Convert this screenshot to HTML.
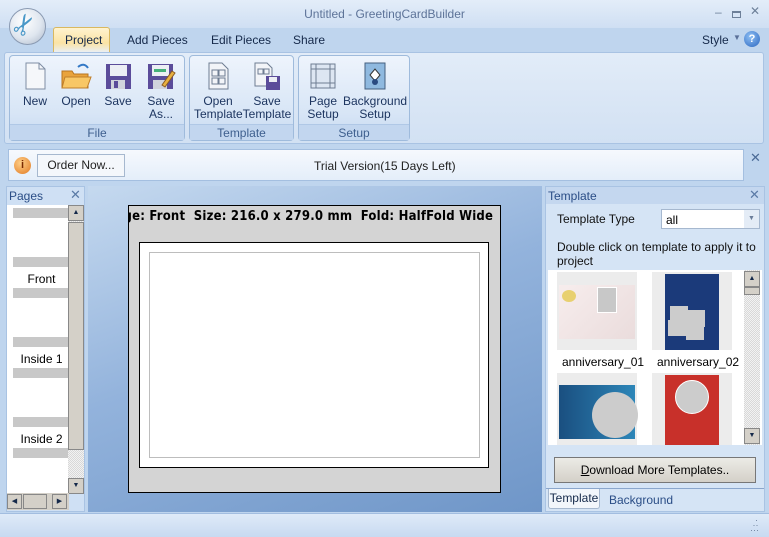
<!DOCTYPE html>
<html><head><style>
*{margin:0;padding:0;box-sizing:border-box}
body{width:769px;height:537px;overflow:hidden;font-family:"Liberation Sans",sans-serif;font-size:12px;color:#15294a;background:#bfd5ee;position:relative}
.a{position:absolute;white-space:nowrap}
.grp{position:absolute;top:55px;height:86px;border:1px solid #9fbbdc;border-radius:4px;background:linear-gradient(#eef4fc,#d7e5f6 70%,#c6d9f0)}
.glab{position:absolute;bottom:0;left:0;right:0;height:16px;background:#c2d6ef;text-align:center;color:#3e5f8e;font-size:12px;line-height:16px;border-top:1px solid #b0c8e6}
.btn{position:absolute;top:5px;text-align:center;font-size:12px;line-height:13px;color:#1d3560;white-space:nowrap}
.btn svg{display:block;margin:0 auto 4px}
.gbar{position:absolute;height:10px;background:#c8c8c8}
.pl{position:absolute;left:5px;width:63px;text-align:center;font-size:12px;color:#000}
</style></head><body>
<div class="a" style="left:0;top:0;width:769px;height:28px;background:linear-gradient(#e3edf9,#cfdff3)"></div>
<div class="a" style="left:0;top:7px;width:769px;text-align:center;color:#5d7398;font-size:12px;">Untitled - GreetingCardBuilder</div>
<div class="a" style="left:715px;top:5px;color:#6d8099;font-size:12px">–</div>
<div class="a" style="left:732px;top:11px;width:9px;height:7px;border:1px solid #6d8099;border-top-width:2px"></div>
<div class="a" style="left:750px;top:4px;color:#6d8099;font-size:12px">✕</div>
<div class="a" style="left:0;top:28px;width:769px;height:24px;background:#bfd5ee"></div>
<div class="a" style="left:9px;top:8px;width:37px;height:37px;border-radius:50%;background:radial-gradient(circle at 40% 35%,#fff,#dfe6ef 55%,#a9b6c8);border:1px solid #8a9ab2"></div>
<div class="a" style="left:13px;top:9px;font-size:28px;line-height:32px;color:#4a98c8;transform:rotate(-60deg)">✂</div>
<div class="a" style="left:53px;top:27px;width:57px;height:26px;background:linear-gradient(#fff3cf,#fbe3a4 60%,#e8f0fb);border:1px solid #d9b860;border-bottom:none;border-radius:3px 3px 0 0"></div>
<div class="a" style="left:65px;top:33px">Project</div>
<div class="a" style="left:127px;top:33px">Add Pieces</div>
<div class="a" style="left:211px;top:33px">Edit Pieces</div>
<div class="a" style="left:293px;top:33px">Share</div>
<div class="a" style="left:702px;top:33px">Style</div>
<div class="a" style="left:733px;top:33px;font-size:8px;color:#5a7099">▼</div>
<div class="a" style="left:744px;top:31px;width:16px;height:16px;border-radius:50%;background:radial-gradient(circle at 40% 35%,#8fc0f4,#2a66c0);color:#fff;font-size:11px;font-weight:bold;text-align:center;line-height:16px">?</div>
<div class="a" style="left:4px;top:52px;width:760px;height:92px;background:linear-gradient(#e2ecf8,#d2e1f3);border:1px solid #a9c3e3;border-radius:3px"></div>
<div class="grp" style="left:9px;width:176px">
 <div class="btn" style="left:5px;width:40px"><svg width="26" height="30"><path d="M4 2h13l6 6v20H4z" fill="#f5f7fa" stroke="#7f8ea4"/><path d="M17 2v6h6" fill="none" stroke="#7f8ea4"/></svg>New</div>
 <div class="btn" style="left:46px;width:40px"><svg width="32" height="30"><path d="M2 10h10l2 3h14v14H2z" fill="#e9a33c" stroke="#b77420"/><path d="M5 16h26l-4 11H2z" fill="#f8c766" stroke="#c07f2a"/><path d="M18 6q6-5 10 1" fill="none" stroke="#3479c6" stroke-width="2"/></svg>Open</div>
 <div class="btn" style="left:88px;width:40px"><svg width="28" height="30"><rect x="2" y="3" width="25" height="25" fill="#5b4c9a"/><rect x="6" y="4" width="17" height="11" fill="#eceef4"/><rect x="7" y="19" width="14" height="9" fill="#d0d3dc"/><rect x="10" y="20" width="4" height="7" fill="#5b4c9a"/></svg>Save</div>
 <div class="btn" style="left:130px;width:42px"><svg width="30" height="30"><rect x="2" y="3" width="25" height="25" fill="#5b4c9a"/><rect x="6" y="4" width="17" height="11" fill="#eceef4"/><rect x="8" y="8" width="12" height="3" fill="#46b07a"/><rect x="7" y="19" width="14" height="9" fill="#d0d3dc"/><path d="M16 24l10-14 3 2-10 14z" fill="#e8b040" stroke="#8a5a20"/></svg>Save<br>As...</div>
 <div class="glab">File</div>
</div>
<div class="grp" style="left:189px;width:105px">
 <div class="btn" style="left:4px;width:48px"><svg width="26" height="30"><path d="M4 2h13l6 6v20H4z" fill="#f2f4f8" stroke="#6e7d92"/><rect x="7" y="9" width="6" height="6" fill="none" stroke="#6e7d92"/><rect x="14" y="9" width="6" height="6" fill="none" stroke="#6e7d92"/><rect x="7" y="17" width="6" height="6" fill="none" stroke="#6e7d92"/><rect x="14" y="17" width="6" height="6" fill="none" stroke="#6e7d92"/></svg>Open<br>Template</div>
 <div class="btn" style="left:52px;width:50px"><svg width="30" height="30"><path d="M3 2h12l5 5v18H3z" fill="#f2f4f8" stroke="#6e7d92"/><rect x="6" y="8" width="5" height="5" fill="none" stroke="#6e7d92"/><rect x="12" y="8" width="5" height="5" fill="none" stroke="#6e7d92"/><rect x="14" y="15" width="14" height="14" fill="#5b4c9a"/><rect x="17" y="16" width="8" height="5" fill="#eceef4"/></svg>Save<br>Template</div>
 <div class="glab">Template</div>
</div>
<div class="grp" style="left:298px;width:112px">
 <div class="btn" style="left:4px;width:40px"><svg width="28" height="30"><rect x="2" y="3" width="24" height="24" fill="#dde6f2" stroke="#6e7d92"/><path d="M2 8h24M2 22h24M7 3v24M21 3v24" stroke="#6e7d92"/></svg>Page<br>Setup</div>
 <div class="btn" style="left:44px;width:64px"><svg width="26" height="30"><rect x="3" y="2" width="20" height="26" fill="#8fb9df" stroke="#44607f"/><path d="M8 14l5-6 5 6-5 6z" fill="#fff" stroke="#333"/><circle cx="13" cy="21" r="3" fill="#2a4a80"/></svg>Background<br>Setup</div>
 <div class="glab">Setup</div>
</div>
<div class="a" style="left:8px;top:149px;width:736px;height:32px;background:linear-gradient(#f6f9fd,#e4eefa);border:1px solid #a4bfe0"></div>
<div class="a" style="left:14px;top:157px;width:17px;height:17px;border-radius:50%;background:radial-gradient(circle at 40% 35%,#ffd08a,#e07820);color:#7a2a00;font-size:11px;font-weight:bold;text-align:center;line-height:17px">i</div>
<div class="a" style="left:37px;top:154px;width:88px;height:23px;background:#f4f7fb;border:1px solid #a6b8cf;text-align:center;line-height:21px;color:#222">Order Now...</div>
<div class="a" style="left:314px;top:159px;color:#222">Trial Version(15 Days Left)</div>
<div class="a" style="left:750px;top:150px;color:#4a6a96;font-size:13px">✕</div>
<div class="a" style="left:6px;top:186px;width:79px;height:326px;background:#cfe0f4;border:1px solid #a9c3e3"></div>
<div class="a" style="left:9px;top:189px;color:#2a4d86">Pages</div>
<div class="a" style="left:70px;top:187px;color:#5a7aa6;font-size:13px">✕</div>
<div class="a" style="left:7px;top:205px;width:62px;height:288px;background:#fff"></div>
<div class="gbar" style="left:13px;top:208px;width:55px"></div>
<div class="gbar" style="left:13px;top:257px;width:55px"></div>
<div class="pl" style="left:10px;top:272px">Front</div>
<div class="gbar" style="left:13px;top:288px;width:55px"></div>
<div class="gbar" style="left:13px;top:337px;width:55px"></div>
<div class="pl" style="left:10px;top:352px">Inside 1</div>
<div class="gbar" style="left:13px;top:368px;width:55px"></div>
<div class="gbar" style="left:13px;top:417px;width:55px"></div>
<div class="pl" style="left:10px;top:432px">Inside 2</div>
<div class="gbar" style="left:13px;top:448px;width:55px"></div>
<div class="a" style="left:68px;top:205px;width:16px;height:288px;background:repeating-conic-gradient(#d8d8d8 0 25%,#f2f2f2 0 50%) 0 0/2px 2px"></div>
<div class="a" style="left:68px;top:205px;width:16px;height:16px;background:#d4d0c8;border:1px solid #888;font-size:7px;text-align:center;line-height:14px">▲</div>
<div class="a" style="left:68px;top:222px;width:16px;height:228px;background:#d4d0c8;border:1px solid #888"></div>
<div class="a" style="left:68px;top:478px;width:16px;height:16px;background:#d4d0c8;border:1px solid #888;font-size:7px;text-align:center;line-height:14px">▼</div>
<div class="a" style="left:7px;top:493px;width:62px;height:17px;background:#d4d0c8"></div>
<div class="a" style="left:7px;top:494px;width:15px;height:15px;background:#d4d0c8;border:1px solid #888;font-size:7px;text-align:center;line-height:13px">◀</div>
<div class="a" style="left:23px;top:494px;width:24px;height:15px;background:#d4d0c8;border:1px solid #888"></div>
<div class="a" style="left:52px;top:494px;width:15px;height:15px;background:#d4d0c8;border:1px solid #888;font-size:7px;text-align:center;line-height:13px">▶</div>
<div class="a" style="left:88px;top:186px;width:454px;height:326px;background:linear-gradient(160deg,#c5d9ef,#93b3dc 45%,#6f96c8)"></div>
<div class="a" style="left:128px;top:205px;width:373px;height:288px;background:#d4d4d4;border:1px solid #000;overflow:hidden">
 <div style="position:absolute;left:-22px;top:3px;white-space:nowrap;font-weight:bold;font-size:13px;color:#000;font-family:'DejaVu Sans Condensed','Liberation Sans Narrow',sans-serif;letter-spacing:0.2px">Page: Front &nbsp;Size: 216.0 x 279.0 mm &nbsp;Fold: HalfFold Wide</div>
 <div style="position:absolute;left:10px;top:36px;width:350px;height:226px;background:#fff;border:1px solid #000"></div>
 <div style="position:absolute;left:20px;top:46px;width:331px;height:206px;border:1px solid #bdbdbd"></div>
</div>
<div class="a" style="left:545px;top:186px;width:220px;height:326px;background:#d5e4f5;border:1px solid #a9c3e3"></div>
<div class="a" style="left:546px;top:187px;width:218px;height:17px;background:#c4d7ef"></div>
<div class="a" style="left:548px;top:189px;color:#2a4d86">Template</div>
<div class="a" style="left:749px;top:187px;color:#5a7aa6;font-size:13px">✕</div>
<div class="a" style="left:557px;top:212px;color:#111">Template Type</div>
<div class="a" style="left:661px;top:209px;width:99px;height:20px;background:#fff;border:1px solid #a6b8cf"></div>
<div class="a" style="left:666px;top:213px;color:#000">all</div>
<div class="a" style="left:744px;top:210px;width:15px;height:18px;background:#e4ecf6;font-size:7px;color:#6a7d99;text-align:center;line-height:18px">▼</div>
<div class="a" style="left:557px;top:240px;color:#111;line-height:14px;width:200px;white-space:normal">Double click on template to apply it to project</div>
<div class="a" style="left:548px;top:270px;width:214px;height:175px;background:#fff"></div>
<div class="a" style="left:557px;top:272px;width:80px;height:78px;background:#ececec"></div>
<div class="a" style="left:559px;top:285px;width:76px;height:54px;background:linear-gradient(135deg,#f7eded,#eadcdc)"></div>
<div class="a" style="left:562px;top:290px;width:14px;height:12px;background:#e8d070;border-radius:50%"></div>
<div class="a" style="left:597px;top:287px;width:20px;height:26px;background:#c8c8c8;border:1px solid #fff"></div>
<div class="a" style="left:652px;top:272px;width:80px;height:78px;background:#ececec"></div>
<div class="a" style="left:665px;top:274px;width:54px;height:76px;background:#1b3a7a"></div>
<div class="a" style="left:670px;top:306px;width:18px;height:17px;background:#ccc"></div>
<div class="a" style="left:687px;top:310px;width:18px;height:17px;background:#ccc"></div>
<div class="a" style="left:668px;top:320px;width:18px;height:16px;background:#ccc"></div>
<div class="a" style="left:686px;top:322px;width:18px;height:18px;background:#ccc"></div>
<div class="a" style="left:562px;top:355px;color:#000">anniversary_01</div>
<div class="a" style="left:657px;top:355px;color:#000">anniversary_02</div>
<div class="a" style="left:557px;top:373px;width:80px;height:72px;background:#ececec"></div>
<div class="a" style="left:559px;top:385px;width:76px;height:54px;background:linear-gradient(90deg,#1a4f80,#2d86b8)"></div>
<div class="a" style="left:592px;top:392px;width:46px;height:46px;background:#ccc;border-radius:50%"></div>
<div class="a" style="left:652px;top:373px;width:80px;height:72px;background:#ececec"></div>
<div class="a" style="left:665px;top:375px;width:54px;height:70px;background:#c8302a"></div>
<div class="a" style="left:675px;top:380px;width:34px;height:34px;background:#ccc;border-radius:50%;border:1px solid #fff"></div>
<div class="a" style="left:744px;top:270px;width:16px;height:175px;background:repeating-conic-gradient(#d8d8d8 0 25%,#f2f2f2 0 50%) 0 0/2px 2px"></div>
<div class="a" style="left:744px;top:271px;width:16px;height:16px;background:#d4d0c8;border:1px solid #888;font-size:7px;text-align:center;line-height:14px">▲</div>
<div class="a" style="left:744px;top:287px;width:16px;height:8px;background:#d4d0c8;border:1px solid #888"></div>
<div class="a" style="left:744px;top:428px;width:16px;height:16px;background:#d4d0c8;border:1px solid #888;font-size:7px;text-align:center;line-height:14px">▼</div>
<div class="a" style="left:554px;top:457px;width:202px;height:26px;background:linear-gradient(#ecebe6,#d4d0c8);border:1px solid #777;text-align:center;line-height:24px;color:#000"><u>D</u>ownload More Templates..</div>
<div class="a" style="left:546px;top:488px;width:218px;height:1px;background:#8aa6cc"></div>
<div class="a" style="left:548px;top:489px;width:52px;height:20px;background:#f2f6fb;border:1px solid #a6b8cf;border-top:none;border-radius:0 0 3px 3px;text-align:center;line-height:19px;color:#15294a">Template</div>
<div class="a" style="left:609px;top:493px;color:#2a4d86">Background</div>
<div class="a" style="left:0;top:513px;width:769px;height:24px;background:linear-gradient(#dfeaf8,#c8daf1);border-top:1px solid #a2bde0"></div>
<div class="a" style="left:750px;top:518px;color:#6a7d99;font-size:9px;line-height:5px">&nbsp;&nbsp;·<br>&nbsp;··<br>···</div>
</body></html>
